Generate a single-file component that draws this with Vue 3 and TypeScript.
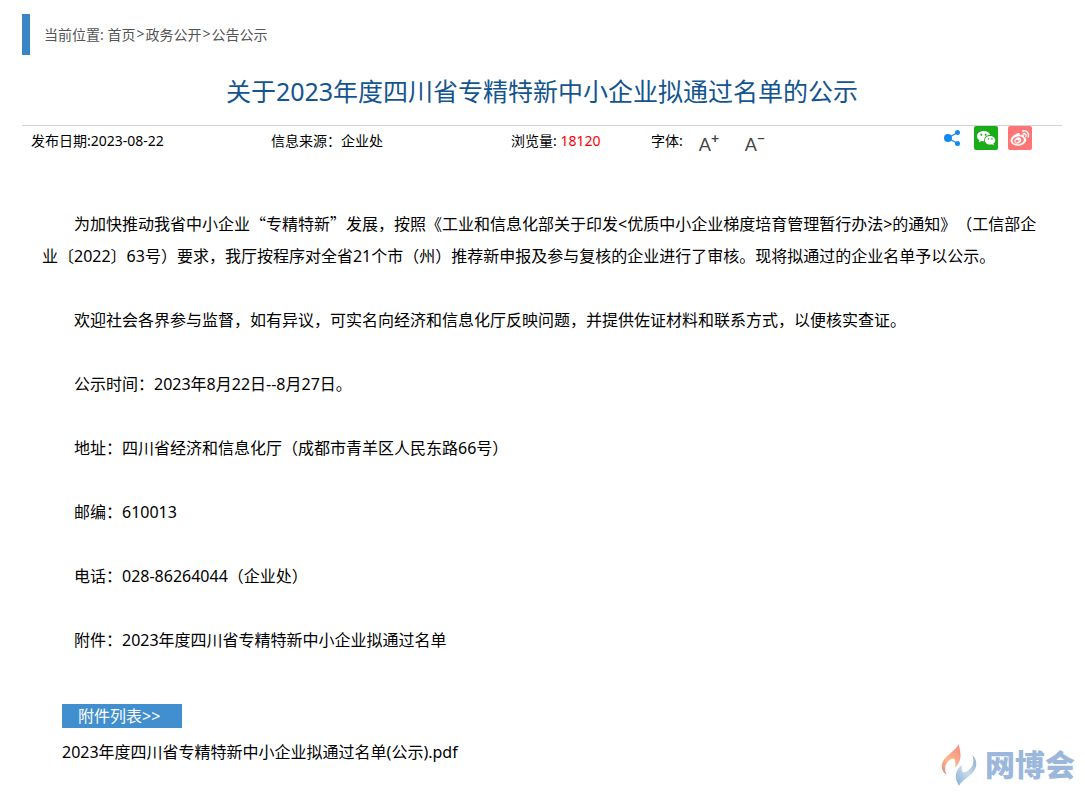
<script setup lang="ts">
import { ref } from 'vue'

const crumbs: string[] = ['首页', '政务公开', '公告公示']
const step = ref(0)
const notes: string[] = [
  '欢迎社会各界参与监督，如有异议，可实名向经济和信息化厅反映问题，并提供佐证材料和联系方式，以便核实查证。',
  '公示时间：2023年8月22日--8月27日。',
  '地址：四川省经济和信息化厅（成都市青羊区人民东路66号）',
  '邮编：610013',
  '电话：028-86264044（企业处）',
  '附件：2023年度四川省专精特新中小企业拟通过名单',
]
</script>

<template>
  <main class="page">
    <nav class="crumbs" aria-label="当前位置">
      <span>当前位置:&nbsp;</span>
      <template v-for="(c, i) in crumbs" :key="c">
        <span v-if="i > 0" class="sep">&gt;</span><a href="#">{{ c }}</a>
      </template>
    </nav>

    <h1>关于2023年度四川省专精特新中小企业拟通过名单的公示</h1>

    <div class="meta">
      <span class="date">发布日期:2023-08-22</span>
      <span class="source">信息来源：企业处</span>
      <span class="views">浏览量: <b>18120</b></span>
      <div class="sizer">
        <span>字体:</span>
        <button type="button" aria-label="放大字体" @click="step++">A<i>+</i></button>
        <button type="button" aria-label="缩小字体" @click="step--">A<i>−</i></button>
      </div>
      <div class="share">
        <a href="#" aria-label="分享">
          <svg width="24" height="24" viewBox="0 0 24 24">
            <path d="M17.500 6.500 8 12l9.500 5.500" fill="none" stroke="#128bf0" stroke-width="1.200" />
            <g fill="#128bf0"><circle cx="8" cy="12" r="4" /><circle cx="17.500" cy="6.500" r="2.500" /><circle cx="17.500" cy="17.500" r="2.500" /></g>
          </svg>
        </a>
        <a href="#" aria-label="微信">
          <svg width="24" height="24" viewBox="0 0 24 24">
            <rect width="24" height="24" rx="2" fill="#1aad19" />
            <path d="M9.500 5C5.900 5 3 7.300 3 10.200c0 1.700 1 3.100 2.400 4L5 16.200l2.300-1.200c.9.300 2 .4 3 .3-.8-3.700 2.200-6.400 5.900-6.300C15.500 6.600 12.800 5 9.500 5z" fill="#fff" />
            <path d="M16 10c-3 0-5.200 2-5.200 4.300s2.200 4.300 5.200 4.300c.7 0 1.400-.1 2-.3l1.900 1-.5-1.700c1.200-.8 1.900-2 1.900-3.300C21.300 12 19 10 16 10z" fill="#fff" />
            <g fill="#1aad19"><circle cx="7.300" cy="8.800" r="1" /><circle cx="11.700" cy="8.800" r="1" /><circle cx="14.400" cy="13" r=".8" /><circle cx="17.900" cy="13" r=".8" /></g>
          </svg>
        </a>
        <a href="#" aria-label="微博">
          <svg width="24" height="24" viewBox="0 0 24 24">
            <rect width="24" height="24" rx="2" fill="#ff7575" />
            <path d="M9.600 7.200c1.500-.6 2.600 0 2.200 2 1.900-.8 4.700-.9 4 1.500 1.500.5 2.500 1.500 2.500 3 0 3.300-4 6-8.300 6s-7.400-2.100-7.400-5.200c0-2.800 3.800-6.300 7-7.300z" fill="#fff" />
            <ellipse cx="10.200" cy="14.300" rx="5.700" ry="3.900" transform="rotate(-7 10.200 14.300)" fill="#ff7575" />
            <ellipse cx="9.800" cy="14.500" rx="3.500" ry="3" transform="rotate(-20 9.800 14.500)" fill="#fff" />
            <circle cx="9" cy="15.200" r="1.300" fill="#ff7575" /><circle cx="11.200" cy="14" r=".6" fill="#ff7575" />
            <path d="M14.600 4.900c4-1 7 2.300 5.700 6M15.200 7.700c2-.4 3.300 1 2.700 2.700" fill="none" stroke="#fff" stroke-width="1.500" stroke-linecap="round" />
          </svg>
        </a>
      </div>
    </div>

    <article :style="{ fontSize: 16 + step + 'px' }">
      <p>为加快推动我省中小企业<span class="q">“</span>专精特新<span class="q">”</span>发展，按照《工业和信息化部关于印发&lt;优质中小企业梯度培育管理暂行办法&gt;的通知》（工信部企业〔2022〕63号）要求，我厅按程序对全省21个市（州）推荐新申报及参与复核的企业进行了审核。现将拟通过的企业名单予以公示。</p>
      <p v-for="n in notes" :key="n">{{ n }}</p>
    </article>

    <section class="files">
      <h2>附件列表&gt;&gt;</h2>
      <a href="#">2023年度四川省专精特新中小企业拟通过名单(公示).pdf</a>
    </section>

    <div class="brand">
      <svg width="36" height="44" viewBox="0 0 36 44">
        <defs>
          <linearGradient id="warm" x1="0.700" y1="0" x2="0.200" y2="1"><stop offset="0" stop-color="#f58d82" /><stop offset=".55" stop-color="#fbb98b" /><stop offset="1" stop-color="#dd8d87" /></linearGradient>
          <linearGradient id="cool" x1="1" y1="0" x2="0" y2="1"><stop offset="0" stop-color="#8ea9c9" /><stop offset=".5" stop-color="#c5dced" /><stop offset="1" stop-color="#8daed0" /></linearGradient>
        </defs>
        <path d="M17.500 1C15 9 1 13 .7 23c0 4 1.800 6.500 4.600 9C3 25 4 20 9.500 16.500c4-2.500 5.500-.5 4.700 8.500C17 21 19.500 18 19.500 13c0-5-1-8-2-12z" fill="url(#warm)" />
        <path d="M18 43c3-7 16.700-11 17.300-21.500 0-4-1.300-7-4-9.500 2.200 7 1 12-4.500 15.700-5 3.500-6.800 1.800-6-6.200-3 3-6 7-6 12 0 4 2 7 3.200 9.500z" fill="url(#cool)" />
      </svg>
      <span>网博会</span>
    </div>
  </main>
</template>

<style>
body {
  margin: 0;
  background: #fff;
}
</style>

<style scoped>
.page {
  position: relative;
  box-sizing: border-box;
  min-height: 100vh;
  padding: 14px 23px 32px 22px;
  color: #000;
  font-family: "Noto Sans", "Noto Sans CJK SC", sans-serif;
  font-size: 14px;
  text-spacing-trim: space-all;
}
a {
  color: inherit;
  text-decoration: none;
}
.crumbs {
  display: flex;
  align-items: center;
  box-sizing: border-box;
  height: 41px;
  padding: 0 0 2px 14px;
  border-left: 8px solid #3985c6;
  color: #555;
}
.sep {
  padding: 0 1px;
}
h1 {
  margin: 14px 0 0;
  padding-bottom: 12px;
  border-bottom: 1px solid #d3d3d3;
  color: #145590;
  font-size: 25px;
  font-weight: 400;
  line-height: 44px;
  text-align: center;
}
.meta {
  display: flex;
  height: 30px;
  padding: 0 30px 0 9px;
  line-height: 30px;
}
.date,
.source {
  width: 240px;
}
.views {
  width: 140px;
}
.views b {
  color: #f00;
  font-weight: 400;
}
.sizer {
  display: flex;
  flex: 1;
  gap: 14px;
}
button {
  display: flex;
  width: 32px;
  padding: 2px 0 0 2px;
  border: 0;
  background: none;
  color: #444;
  font-family: Lato, sans-serif;
  font-size: 18px;
  line-height: 32px;
  cursor: pointer;
}
button i {
  font-size: 14px;
  font-style: normal;
  font-weight: 700;
  line-height: 20px;
}
.share {
  display: flex;
  gap: 10px;
}
.share a,
.share svg {
  display: block;
  height: 24px;
}
article {
  margin-top: 51px;
  padding: 0 20px;
  line-height: 32px;
}
article p {
  margin: 0 0 32px;
  text-indent: 2em;
}
.q {
  font-family: "Noto Sans CJK SC", sans-serif;
}
.files {
  display: flex;
  flex-direction: column;
  align-items: flex-start;
  gap: 12px;
  margin-top: 48px;
  padding-left: 40px;
  font-size: 16px;
  line-height: 24px;
}
.files h2 {
  box-sizing: border-box;
  width: 120px;
  margin: 0;
  padding-left: 16px;
  background: #428fd0;
  color: #fff;
  font-size: 16px;
  font-weight: 400;
}
.brand {
  position: absolute;
  right: 10px;
  bottom: 10px;
  display: flex;
  align-items: center;
  gap: 8px;
  color: #9bb8dc;
  font-family: "Noto Sans CJK SC", sans-serif;
  font-size: 30px;
  font-weight: 900;
  line-height: 40px;
}
.brand span {
  padding-bottom: 4px;
}
</style>
